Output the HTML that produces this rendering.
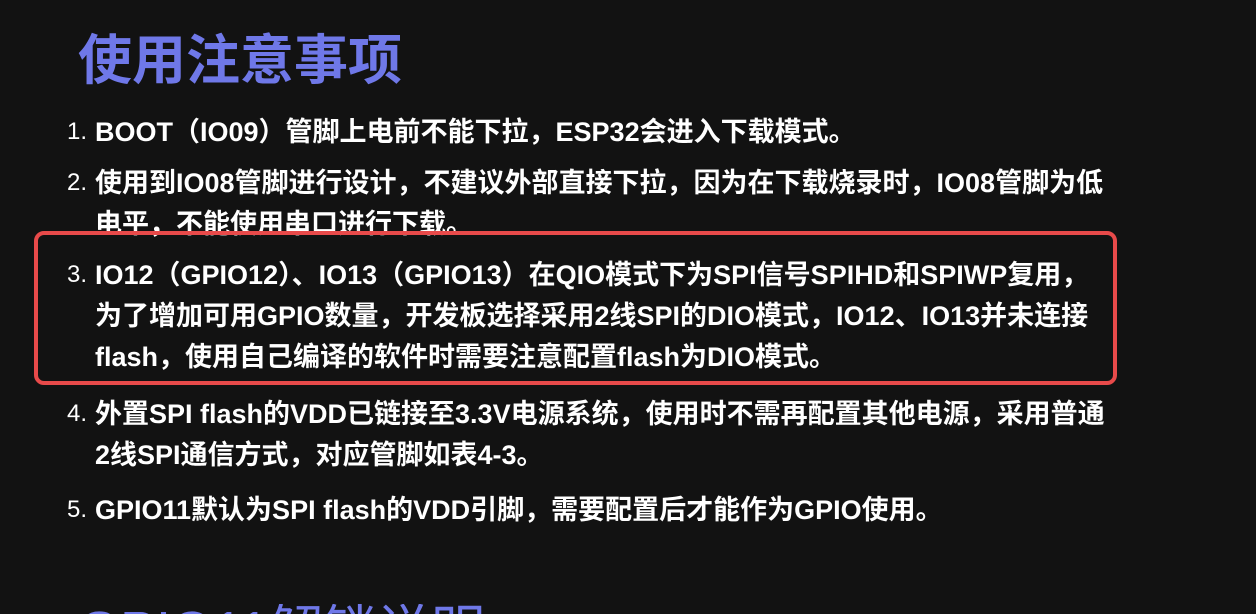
<!DOCTYPE html>
<html><head><meta charset="utf-8"><style>
html,body{margin:0;padding:0;width:1256px;height:614px;overflow:hidden;}
body{background:#121212;position:relative;font-family:"Liberation Sans","Noto Sans CJK SC",sans-serif;}
.t{position:absolute;left:78px;color:#6f78e8;font-weight:bold;font-size:54px;line-height:1;white-space:nowrap;}
.l{position:absolute;left:95px;color:#fff;font-weight:bold;font-size:27px;line-height:30px;white-space:nowrap;}
.n{position:absolute;left:67px;color:#fff;font-size:24px;line-height:30px;}
.box{position:absolute;left:34px;top:231px;width:1075px;height:146px;border:4px solid #e84a4a;border-radius:10px;z-index:2;}
.bt{position:absolute;left:78px;top:604px;height:10px;overflow:hidden;}
</style></head><body>
<div class="t" style="top:34px">使用注意事项</div>
<div class="n" style="top:117px">1.</div>
<div class="l" style="top:117px">BOOT（IO09）管脚上电前不能下拉，ESP32会进入下载模式。</div>
<div class="n" style="top:168px">2.</div>
<div class="l" style="top:168px">使用到IO08管脚进行设计，不建议外部直接下拉，因为在下载烧录时，IO08管脚为低</div>
<div class="l" style="top:209px">电平，不能使用串口进行下载。</div>
<div class="box"></div>
<div class="n" style="top:260px">3.</div>
<div class="l" style="top:260px">IO12（GPIO12）、IO13（GPIO13）在QIO模式下为SPI信号SPIHD和SPIWP复用，</div>
<div class="l" style="top:301px">为了增加可用GPIO数量，开发板选择采用2线SPI的DIO模式，IO12、IO13并未连接</div>
<div class="l" style="top:342px">flash，使用自己编译的软件时需要注意配置flash为DIO模式。</div>
<div class="n" style="top:399px">4.</div>
<div class="l" style="top:399px">外置SPI flash的VDD已链接至3.3V电源系统，使用时不需再配置其他电源，采用普通</div>
<div class="l" style="top:440px">2线SPI通信方式，对应管脚如表4-3。</div>
<div class="n" style="top:495px">5.</div>
<div class="l" style="top:495px">GPIO11默认为SPI flash的VDD引脚，需要配置后才能作为GPIO使用。</div>
<div class="bt"><div class="t" style="position:static;font-weight:normal;">GPIO11解锁说明</div></div>
</body></html>
